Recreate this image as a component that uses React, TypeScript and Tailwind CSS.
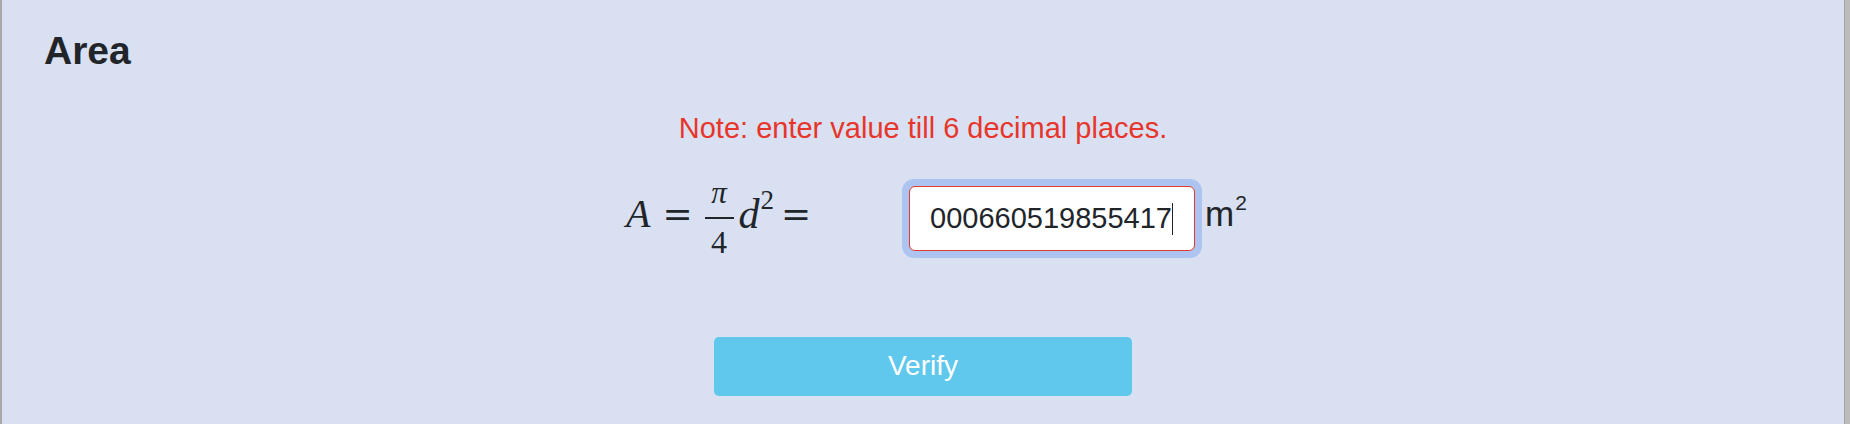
import React from 'react';

function Formula() {
    return (
        <div className="flex w-[184px] items-center text-[#212529] font-['Liberation_Serif',_'DejaVu_Serif',serif]">
            <span className="pb-[10px] text-[40px] italic leading-none">A</span>
            <span className="ml-[12px] pb-[10px] text-[36px] leading-none font-['DejaVu_Serif',serif]">=</span>
            <div className="ml-[12px] flex flex-col items-center pb-[3px]">
                <span className="text-[31px] italic leading-none">π</span>
                <div className="mt-[9px] h-[1.5px] w-[29px] bg-[#212529]" />
                <span className="mt-[7px] text-[32px] leading-none">4</span>
            </div>
            <span className="ml-[5px] pb-[10px] text-[42px] italic leading-none">d</span>
            <span className="mb-[36px] ml-[1px] text-[27px] leading-none">2</span>
            <span className="ml-[7px] pb-[10px] text-[36px] leading-none font-['DejaVu_Serif',serif]">=</span>
        </div>
    );
}

function App() {
    return (
        <div className="flex h-[424px] w-full overflow-hidden bg-[#d8e0f1] text-[#212529] font-['Liberation_Sans',Arial,sans-serif]">
            <div className="w-[2px] bg-[#a9a9a9]" />
            <div className="flex flex-1 flex-col">
                <h2 className="ml-[42px] mt-[31px] text-[39px] font-bold leading-none">Area</h2>
                <p className="mt-[44px] text-center text-[29px] leading-none text-[#e8352b]">
                    Note: enter value till 6 decimal places.
                </p>
                <div className="mt-[34px] flex items-center justify-center pl-[25px]">
                    <Formula />
                    <div className="ml-[92px] rounded-[12px] bg-[#adc4f0] p-[7px]">
                        <div className="flex h-[65px] w-[286px] items-center rounded-[6px] border border-[#e3392e] bg-white pl-[20px] text-[29px] leading-none">
                            000660519855417
                            <span className="h-[32px] w-[1.5px] bg-[#212529]" />
                        </div>
                    </div>
                    <div className="ml-[3px] flex w-[40px] items-start pb-[10px]">
                        <span className="text-[35px] leading-none">m</span>
                        <span className="-mt-[4px] ml-[1px] text-[21px] leading-none">2</span>
                    </div>
                </div>
                <div className="mt-[76px] flex justify-center">
                    <button className="h-[59px] w-[418px] rounded-[5px] bg-[#5fc8ec] text-[28px] text-white">
                        Verify
                    </button>
                </div>
            </div>
            <div className="w-[6px] border-l border-[#a4a4a4] bg-[#bcbcbc]" />
        </div>
    );
}

export default App
